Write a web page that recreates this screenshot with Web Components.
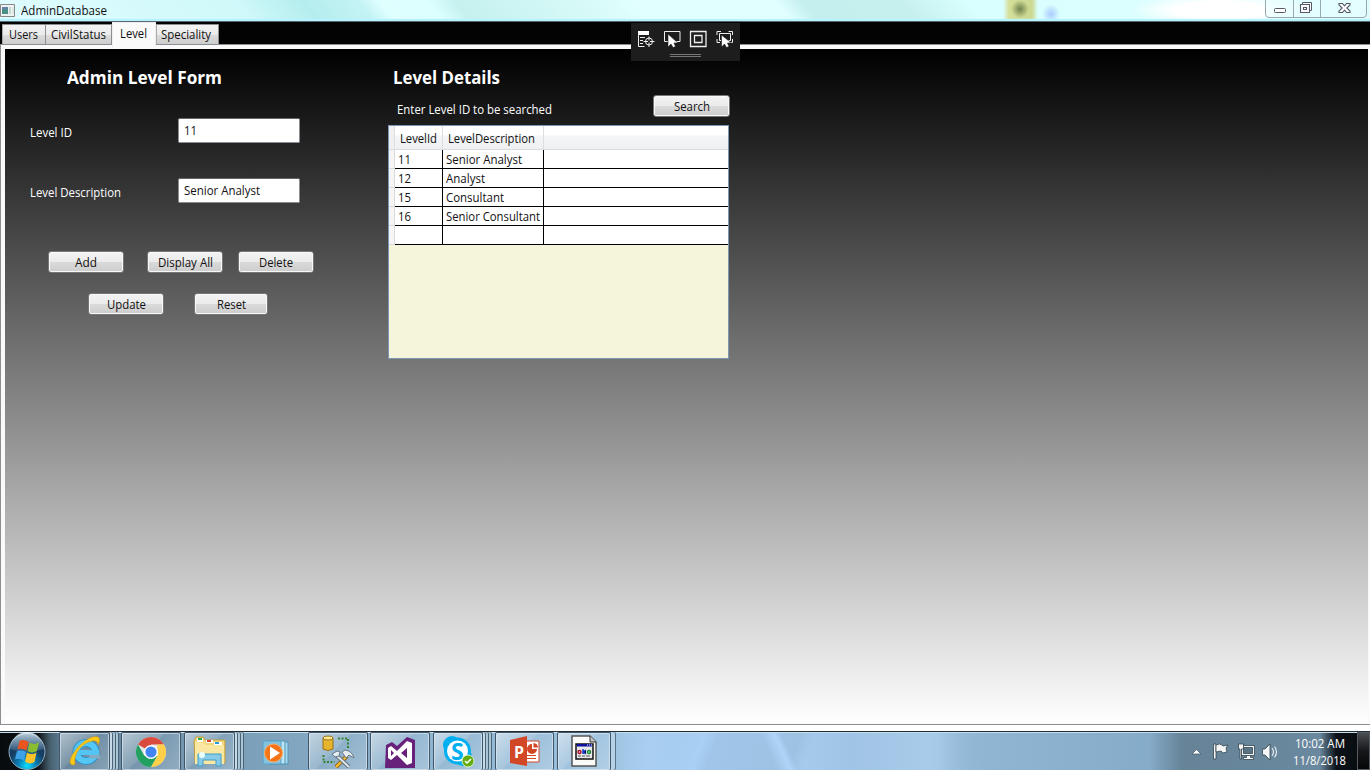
<!DOCTYPE html>
<html lang="en">
<head>
<meta charset="utf-8">
<title>AdminDatabase</title>
<style>
html,body{margin:0;height:100%;overflow:hidden}
body{font:12px/16px "Open Sans","Noto Sans",sans-serif;color:#111;background:#fff}
</style>
</head>
<body>
<admin-desktop></admin-desktop>
<script>
const define=(name,html,init)=>customElements.define(name,class extends HTMLElement{
  connectedCallback(){
    if(this.shadowRoot)return;
    const t=document.createElement('template');
    t.innerHTML=html;
    this.attachShadow({mode:'open'}).append(t.content.cloneNode(true));
    if(init)init.call(this,this.shadowRoot);
  }
});

/* Text condensed to the width given in "w". */
define('fit-text',`<style>:host{display:block;flex:none;white-space:nowrap;overflow:visible}
span{display:inline-block;transform-origin:0 50%}</style><span><slot></slot></span>`,function(r){
  const w=+this.getAttribute('w'),s=r.querySelector('span');
  this.style.width=w+'px';
  const n=s.offsetWidth;
  if(n)s.style.transform=`scaleX(${w/s.getBoundingClientRect().width})`;
});

define('push-button',`<style>
:host{display:flex;flex:none;box-sizing:border-box;width:76px;height:22px;padding-top:2px;align-items:center;justify-content:center;border:1px solid #777;border-radius:3px;color:#111;
background:linear-gradient(#f3f3f3,#ebebeb 50%,#dadada 51%,#cdcdcd);box-shadow:inset 0 0 0 1px #f8f8f8}
</style><slot></slot>`);

define('text-field',`<style>
:host{display:flex;flex:none;box-sizing:border-box;width:122px;height:25px;align-items:center;padding:1px 0 0 5px;border:1px solid #777;border-radius:2px;background:#fff;border-color:#666 #8a8d94 #8a8d94}
</style><slot></slot>`);

define('title-bar',`<style>
:host{display:flex;flex:none;height:22px;box-sizing:border-box;border-bottom:1px solid #55686d;position:relative;overflow:hidden;
background:linear-gradient(#0000 88%,#b8f2ff 89%),radial-gradient(ellipse 9px 10px at 1051px 14px,#a9ccff,#0000),
radial-gradient(ellipse 9px 9px at 1020px 9px,#70824d,#0000),linear-gradient(90deg,#0000 1003px,#d4df98 1009px,#ccd992 1032px,#0000 1038px),
radial-gradient(ellipse 90px 17px at 1220px 10px,#fff 50%,#fff0),
linear-gradient(50deg,#dffcff 0,#d0f9fa 18%,#b5edee 23%,#c4f3f5 27%,#e0ffff 28.5%,#dcffff 32%,#c5f1ef 34%,#d9fbf9 44%,#e1ffff 47%,#e1ffff 57%,#c4efee 59%,#c6f0ed 66%,#d9ffff 71%,#dffdfd 100%)}
.app{width:15px;height:13px;margin:4px 6px 0 0}
fit-text{margin-top:3px;color:#111}
.ctl{margin-left:auto;margin-right:2px;width:104px;height:19px}
</style>
<svg class="app" viewBox="0 0 15 13"><path d="M.5 .5h14v12H.5z" fill="#eef2f1" stroke="#888"/><path d="M2 3h6v7H2z" fill="#4a9085"/><path d="M2 3h6v2H2z" fill="#6681ad"/><path d="M9 3h2v7H9z" fill="#c9d7d3"/><path d="M12 3h2v7h-2z" fill="#dce9e4"/></svg>
<fit-text w="86">AdminDatabase</fit-text>
<svg class="ctl" viewBox="0 0 104 19"><path d="M1.500 -2V14q0 3.500 3.500 3.500H99q3.500 0 3.500-3.500V-2M29.500 0V17M56.500 0V17" fill="#e9ffff66" stroke="#97a9b0"/>
<rect x="10.500" y="8.500" width="11" height="4" rx="1" fill="#fff" stroke="#555a6b"/>
<path d="M38.500 2.500h9v8h-2v2h-9v-8h2z" fill="#fff" stroke="#555a6b"/><path d="M36.500 4.500h9v8h-9zM39.500 7.500h3v2h-3z" fill="#fff" stroke="#555a6b" stroke-width="1.100"/>
<path d="M75 3.500h3.500l2 2.300 2-2.300H86v1.500L82.800 8 86 11v1.500h-3.500l-2-2.300-2 2.300H75V11l3.200-3L75 5z" fill="#fff" stroke="#555a6b" stroke-width="1.100"/></svg>`);

define('tab-item',`<style>
:host{display:flex;flex:none;box-sizing:border-box;height:21px;margin-top:2px;padding:2px 0 0 6px;border:1px solid #8c8e94;border-left-color:#aaa;background:linear-gradient(#f3f3f3,#ebebeb 50%,#dcdcdc 51%,#cdcdcd)}
:host([selected]){height:25px;margin-top:0;padding-top:3px;padding-left:7px;background:#fafafa;border-bottom:0;position:relative;border-color:#eee}
</style><slot></slot>`);

define('tab-strip',`<style>:host{display:flex;flex:none;height:22px;padding-left:2px;background:#030303;align-items:flex-start}</style>
<tab-item style="width:44px"><fit-text w="29">Users</fit-text></tab-item>
<tab-item style="width:66px;padding-left:5px;border-left:0"><fit-text w="55">CivilStatus</fit-text></tab-item>
<tab-item selected style="width:44px"><fit-text w="27">Level</fit-text></tab-item>
<tab-item style="width:63px;padding-left:4px"><fit-text w="50">Speciality</fit-text></tab-item>`);

define('level-form',`<style>
:host{display:flex;flex-direction:column;flex:none;width:383px;color:#fff}
.r{display:flex;flex:none;align-items:flex-start}
h1{margin:0;font:700 18px/24px "Open Sans","Noto Sans",sans-serif}
text-field{color:#111}
</style>
<div class="r" style="height:69px;padding:16px 0 0 62px;box-sizing:border-box"><h1><fit-text w="155">Admin Level Form</fit-text></h1></div>
<div class="r" style="height:60px;padding-left:25px"><fit-text w="42" style="margin:7px 106px 0 0">Level ID</fit-text><text-field><fit-text w="13">11</fit-text></text-field></div>
<div class="r" style="height:73px;padding-left:25px"><fit-text w="91" style="margin:7px 57px 0 0">Level Description</fit-text><text-field><fit-text w="76">Senior Analyst</fit-text></text-field></div>
<div class="r" style="height:42px;padding-left:43px"><push-button style="margin-right:23px"><fit-text w="22">Add</fit-text></push-button><push-button style="margin-right:15px"><fit-text w="55">Display All</fit-text></push-button><push-button><fit-text w="34">Delete</fit-text></push-button></div>
<div class="r" style="padding-left:83px"><push-button style="margin-right:30px"><fit-text w="39">Update</fit-text></push-button><push-button style="width:74px"><fit-text w="29">Reset</fit-text></push-button></div>`);

define('level-grid',`<style>
:host{display:block;box-sizing:border-box;width:341px;height:234px;border:1px solid #7c97b5;background:#f5f5dc}
.h,.r{display:grid;grid-template-columns:6px 48px 101px 1fr;box-sizing:border-box}
.h{height:24px;background:linear-gradient(#fff,#fff 40%,#f5f6f8 42%,#eff0f2);border-bottom:1px solid #dadde0}
.h>*{border-right:1px solid #dcdee1;padding:5px 0 0 5px}
.h>:first-child{padding:0;background:#f0f0f0}
.h>:last-child,.r>:last-child{border-right:0}
.r{height:19px;background:#fff}
.r>*{border-right:1px solid #000;border-bottom:1px solid #000;padding:2px 0 0 3px;box-sizing:border-box;height:19px}
.r>:first-child{padding:0;border-color:#dadada;background:#f5f5f5}
</style>
<div class="h"><i></i><div><fit-text w="37">LevelId</fit-text></div><div><fit-text w="87">LevelDescription</fit-text></div><i></i></div><section></section>`,function(r){
  r.querySelector('section').innerHTML=[['11','Senior Analyst',76],['12','Analyst',39],['15','Consultant',58],['16','Senior Consultant',94],['','',0]]
  .map(([a,b,w])=>`<div class="r"><i></i><div>${a&&`<fit-text w="13">${a}</fit-text>`}</div><div>${b&&`<fit-text w="${w}">${b}</fit-text>`}</div><i></i></div>`).join('');
});

define('level-details',`<style>
:host{display:flex;flex-direction:column;flex:none;width:342px}
h1{margin:16px 0 0 5px;height:30px;color:#fff;font:700 18px/24px "Open Sans","Noto Sans",sans-serif}
.s{display:flex;height:30px;align-items:flex-start}
.s>fit-text{color:#fff;margin:7px 101px 0 9px}
push-button{width:77px}
level-grid{margin-left:0}
</style><h1><fit-text w="107">Level Details</fit-text></h1>
<div class="s"><fit-text w="155">Enter Level ID to be searched</fit-text><push-button><fit-text w="36">Search</fit-text></push-button></div><level-grid></level-grid>`);

define('debug-toolbar',`<style>:host{position:absolute;left:631px;top:23px;width:109px;height:38px;background:#1d1d1d}svg{display:block}</style>
<svg width="109" height="38" viewBox="0 0 109 38" fill="none" stroke="#eee">
<path d="M7 8h11v4H7z" fill="#fff" stroke="none"/><path d="M7.500 10v13.500h6M9 14.500h5M9 17.500h3M9 20.500h3"/><circle cx="18" cy="18.500" r="3.500"/><path d="M18 13.500v4m0 2v4.500M12.500 18.500H17m2 0h4.500"/>
<path d="M37 18.500h-3.500v-10h15.500v10h-4"/><path d="M37 11v13l3-3 2 3.500 2.500-1-1.500-3.500h4z" fill="#fff" stroke="#1d1d1d" stroke-width=".6"/>
<path d="M59.500 8.500h15.500v15H59.500zM63.500 12.500h7.500v7h-7.500z" stroke-width="1.300"/>
<path d="M86 12V8.500h4M97.500 8.500h4V12M101.500 16v3.500H98M86 16v3.500h3M90 17.500h-1.500v-7h11v7H97"/><path d="M90.500 12v12l3-3 2 3.500 2.500-1-1.500-3.500h4z" fill="#fff" stroke="#1d1d1d" stroke-width=".6"/>
<path d="M39 31.500h31M39 33.500h31" stroke="#777"/></svg>`);

define('task-button',`<style>
:host{display:flex;flex:none;box-sizing:border-box;height:38px;padding-bottom:2px;align-items:center;justify-content:center;border:1px solid #42566a;border-bottom:0;border-radius:2px;box-shadow:inset 0 0 0 1px #dceaf5a0;background:linear-gradient(135deg,#ffffff85,#ffffff2b 45%,#ffffff10 46%,#ffffff38)}
:host([plain]){border:0;box-shadow:none;background:none}
:host([stack]){margin-right:var(--s,10px);box-shadow:inset 0 0 0 1px #dceaf5a0,2px 0 #c6dae7,3px 0 #4c6477,5px 0 #a9c4d5,6px 0 #4c6477,8px 0 #a9c4d5,9px 0 #4c6477}
:host([last]){box-shadow:inset 0 0 0 1px #dceaf5a0,4px 0 #b4d1e5,5px 0 #59748a}
</style><slot></slot>`);

define('task-bar',`<style>
:host{display:flex;flex:none;box-sizing:border-box;height:39px;border-top:1px solid #222c35;box-shadow:inset 0 1px #c8deed;color:#fff;
background:linear-gradient(90deg,#080b0e 0,#0b1015 38px,#47606f 50px,#5d7d94 62px,#6b8da5 125px,#7c9fb9 240px,#8fb4d0 430px,#9cc1de 600px,#0000 625px),
linear-gradient(90deg,#0000 930px,#8fb5d3 990px,#84abc8 1150px,#668398 1182px,#6a889e 1320px,#0d1319 1336px,#05090d),
linear-gradient(65deg,#0000 56%,#b0d4f7 57%,#0000 57.5%),
linear-gradient(110deg,#0000 46%,#a9d0f5 51%,#a0c5e9 52%,#9dc2e2 58%,#0000 59%),
linear-gradient(90deg,#9fc3df 600px,#a8cdf0 650px,#a0c5df 700px,#acd2f4 750px,#a0c4e5 850px,#a9ccea 940px,#8eb4d1 990px,#84abc8)}
svg{display:block;flex:none}
.tray{margin-left:auto;width:190px;display:flex;align-items:center}
.clock{display:flex;flex-direction:column;align-items:center;line-height:17px;margin:2px 0 0 11px;width:53px}
.show{box-sizing:border-box;width:13px;height:38px;margin-left:auto;border:1px solid #555b60;background:linear-gradient(#4a4d50,#15171a 50%,#050607)}
</style>
<svg width="59" height="38" viewBox="0 0 59 38"><defs><radialGradient id="o" cy=".9"><stop stop-color="#0be1ff"/><stop offset=".45" stop-color="#0787bd"/><stop offset="1" stop-color="#183d62"/></radialGradient><linearGradient id="g" x2="0" y2="1"><stop stop-color="#eefaff" stop-opacity=".8"/><stop offset="1" stop-color="#bbdff1" stop-opacity=".1"/></linearGradient></defs>
<circle cx="27" cy="19.500" r="18" fill="url(#o)" stroke="#8faec0"/><path d="M10 17a17 17 0 0 1 34 0q-17 6-34 0" fill="url(#g)"/>
<path d="M19.500 9q4-2.500 9 1l-2 8.500q-5-3-9-1z" fill="#e9541f"/><path d="M29.500 10.500q5 3 9.500-.5l-2 9q-5 3-9.500 0z" fill="#88bc31"/><path d="M17 19q5-2 9 1l-2 8.500q-5-3-9-1z" fill="#3fa2e9"/><path d="M27 20.500q5 3 9.500 0l-2 9.500q-5 3-9.500-.5z" fill="#fcc328"/></svg>
<task-button stack style="width:51px;--s:11px"><svg width="32" height="34" viewBox="0 0 32 34"><ellipse cx="17" cy="18" rx="9.500" ry="9" fill="none" stroke="#2e8fc8" stroke-width="8"/><ellipse cx="17" cy="18" rx="9.500" ry="9" fill="none" stroke="#55c7f4" stroke-width="6"/><path d="M10 16h20v5H10z" fill="#52c5f2"/><path d="M20 21h11v3.500H20z" fill="#86abc2"/><path d="M4 31C-7 30 16-1 29 3q3 2 0 8 0-5-6-4C12 9 4 21 6 30z" fill="#fbc916" stroke="#d69a0b" stroke-width=".6"/></svg></task-button>
<task-button style="width:60px;margin-right:3px"><svg width="32" height="34" viewBox="0 0 32 34"><circle cx="16" cy="18" r="15" fill="#e5e5e5"/><path d="M16 18L3 10.500A15 15 0 0 1 29 10.500H16z" fill="#d94b3d"/><path d="M3 10.500A15 15 0 0 0 16 33l6.500-11L16 18l-6.500 4z" fill="#22a062"/><path d="M29 10.500A15 15 0 0 1 16 33l6.500-11V10.500z" fill="#fecf48"/><circle cx="16" cy="18" r="7" fill="#fff"/><circle cx="16" cy="18" r="5.600" fill="#4284f3"/></svg></task-button>
<task-button stack style="width:51px;--s:9px"><svg width="34" height="34" viewBox="0 0 34 34"><path d="M1 7l2-4h7l2 3h20v23H2z" fill="#f2d878" stroke="#bd9c43"/><path d="M4 4h6v4H4zM13 6h7v3h-7zM21 8h8v3h-8z" fill="#fff"/><path d="M5 4h4v2H5z" fill="#2aad38"/><path d="M14 6h4v2h-4z" fill="#d5432c"/><path d="M22 8h4v2h-4z" fill="#279bda"/><path d="M2 8l9 1 2 2h18v19H2z" fill="#f9e7a2"/><path d="M5 32V20h23v12h-5v-6H10v6z" fill="#87cbe9" stroke="#409ec9"/><circle cx="9" cy="21" r="3" fill="#eaffff"/></svg></task-button>
<task-button plain style="width:64px"><svg width="34" height="34" viewBox="0 0 34 34"><path d="M12 8l17 1v22H12z" fill="#aadaf0" stroke="#4e94b6"/><path d="M9 8h17v23H9z" fill="#bce5f6" stroke="#4e94b6"/><path d="M4 8h18v23H4z" fill="#83c3e0" stroke="#58a3c7"/><circle cx="14.500" cy="20" r="9" fill="#f47519" stroke="#ffac61"/><path d="M11 13.500l10 6.500-10 6.500z" fill="#fff"/></svg></task-button>
<task-button style="width:60px;margin-right:2px"><svg width="34" height="34" viewBox="0 0 34 34"><path d="M2 4v11q5 3 10 0V4" fill="#e6b42f" stroke="#9a7017"/><ellipse cx="7" cy="4" rx="5" ry="2" fill="#ffe98b" stroke="#9a7017"/><path d="M17 4.500h10v11M2.500 21v7h11" fill="none" stroke="#348337" stroke-width="2" stroke-dasharray="2 1.500"/><path d="M26 22L15 33" stroke="#725018" stroke-width="4"/><path d="M26 22L15 33" stroke="#f4b62c" stroke-width="2.500"/><path d="M14 20l14 13" stroke="#606e79" stroke-width="4"/><path d="M14 20l14 13" stroke="#dfe8ed" stroke-width="2"/><path d="M11 20l3 3 4-1 1-4-3-1zM21 18l3-2q7 1 9 8l-5-3-3 3z" fill="#e5edf2" stroke="#687986"/></svg></task-button>
<task-button style="width:60px;margin-right:3px"><svg width="34" height="34" viewBox="0 0 34 34"><path d="M3 11l6-3 5 4 10-9 8 3v28H2z" fill="#68217a"/><path d="M5 14l3-2 6 5 10-10 5 2v20l-5 2-10-10-6 5-3-2zM8 16v6l3-3zM24 14l-6 5 6 5z" fill="#fff" fill-rule="evenodd"/></svg></task-button>
<task-button stack style="width:50px;--s:12px"><svg width="34" height="34" viewBox="0 0 34 34"><circle cx="11" cy="11" r="9" fill="#00aff0"/><circle cx="22" cy="23" r="9" fill="#00aff0"/><circle cx="16.500" cy="17" r="13.500" fill="#00aff0"/><circle cx="16.500" cy="17" r="10.500" fill="#fff"/><text x="10" y="25.500" font-family="Open Sans" font-weight="700" font-size="23" fill="#00aff0">S</text><circle cx="27" cy="27" r="6" fill="#65ac11" stroke="#dceec8"/><path d="M24 27l2 2 4-4" fill="none" stroke="#fff" stroke-width="1.500"/></svg></task-button>
<task-button style="width:59px;margin-right:3px"><svg width="34" height="34" viewBox="0 0 34 34"><path d="M16 7h15v21H16z" fill="#fff" stroke="#d24726"/><path d="M24 10a5 5 0 1 0 5 5h-5zM25.500 9v4.500H30A5 5 0 0 0 25.500 9z" fill="#d24726"/><path d="M19 21.500h9M19 24.500h9" stroke="#d24726"/><path d="M2 6l17-4v30L2 29z" fill="#d24726"/><text x="6" y="23.500" font-family="Open Sans" font-weight="700" font-size="16" fill="#fff">P</text></svg></task-button>
<task-button last style="width:54px"><svg width="28" height="34" viewBox="0 0 28 34"><path d="M2 2h18l6 6v24H2z" fill="#fafaf8" stroke="#555" stroke-width="1.500"/><path d="M20 2v6h6" fill="#c6c6c6" stroke="#333"/><path d="M6 10h17v15H6z" fill="#e9e9e9" stroke="#111" stroke-width="1.500"/><path d="M7 10h15v2.500H7z" fill="#0b119d"/><path d="M17 11h1m1 0h1m1 0h1" stroke="#fff"/><circle cx="9.500" cy="18" r="1.500" fill="none" stroke="#b20d27" stroke-width="1.400"/><path d="M13 15v5m3-4l-3 2 3 2" stroke="#183bd0" stroke-width="1.500"/><circle cx="19" cy="18" r="1.500" fill="none" stroke="#148c31" stroke-width="1.500"/><path d="M8 22h3m1 0h3m1 0h4" stroke="#555"/></svg></task-button>
<div class="tray"><svg width="102" height="30" viewBox="0 0 102 30"><path d="M12 18l4.500-4.500 4.500 4.500z" fill="#fff" stroke="#495f71" stroke-width=".8"/>
<g fill="#f5f5f5" stroke="#34454f" stroke-width=".8" transform="translate(0.500 1)"><path d="M33 7h2.500v15H33z"/><path d="M35.500 8q4-2 6 0l1 1 5-1-2 3 1 4-4 1-2-2-5 1z"/><path d="M61 8.500h13v10H61z"/><path d="M63 10.500h9v6h-9z" fill="#597486"/><path d="M66 18.500h4v2h3v2H63v-2h3zM58 7h5v5h-2v10h-1.500V12H58z"/><path d="M82 12h2.500l5-5v16l-5-5H82z"/></g><path d="M92 12q3 4 0 8M94.500 10.500q4 5.500 0 11" fill="none" stroke="#e6edf1" stroke-width="1.200"/></svg>
<div class="clock"><fit-text w="50">10:02 AM</fit-text><fit-text w="53">11/8/2018</fit-text></div><div class="show"></div></div>`);

define('admin-desktop',`<style>
:host{display:flex;flex-direction:column;width:1370px;height:770px;position:relative;overflow:hidden}
.frame{flex:none;height:681px;box-sizing:border-box;padding:4px 1px 1px 4px;border:1px solid #8c8e94;border-right:0;background:#fafafa}
.panel{box-sizing:border-box;height:674px;width:1363px;display:flex;align-items:flex-start;background:linear-gradient(#000,#fff)}
.gap{flex:1;background:#fff}
</style><title-bar></title-bar><tab-strip></tab-strip><div class="frame"><div class="panel"><level-form></level-form><level-details></level-details></div></div><div class="gap"></div><task-bar></task-bar><debug-toolbar></debug-toolbar>`);
</script>
</body>
</html>
